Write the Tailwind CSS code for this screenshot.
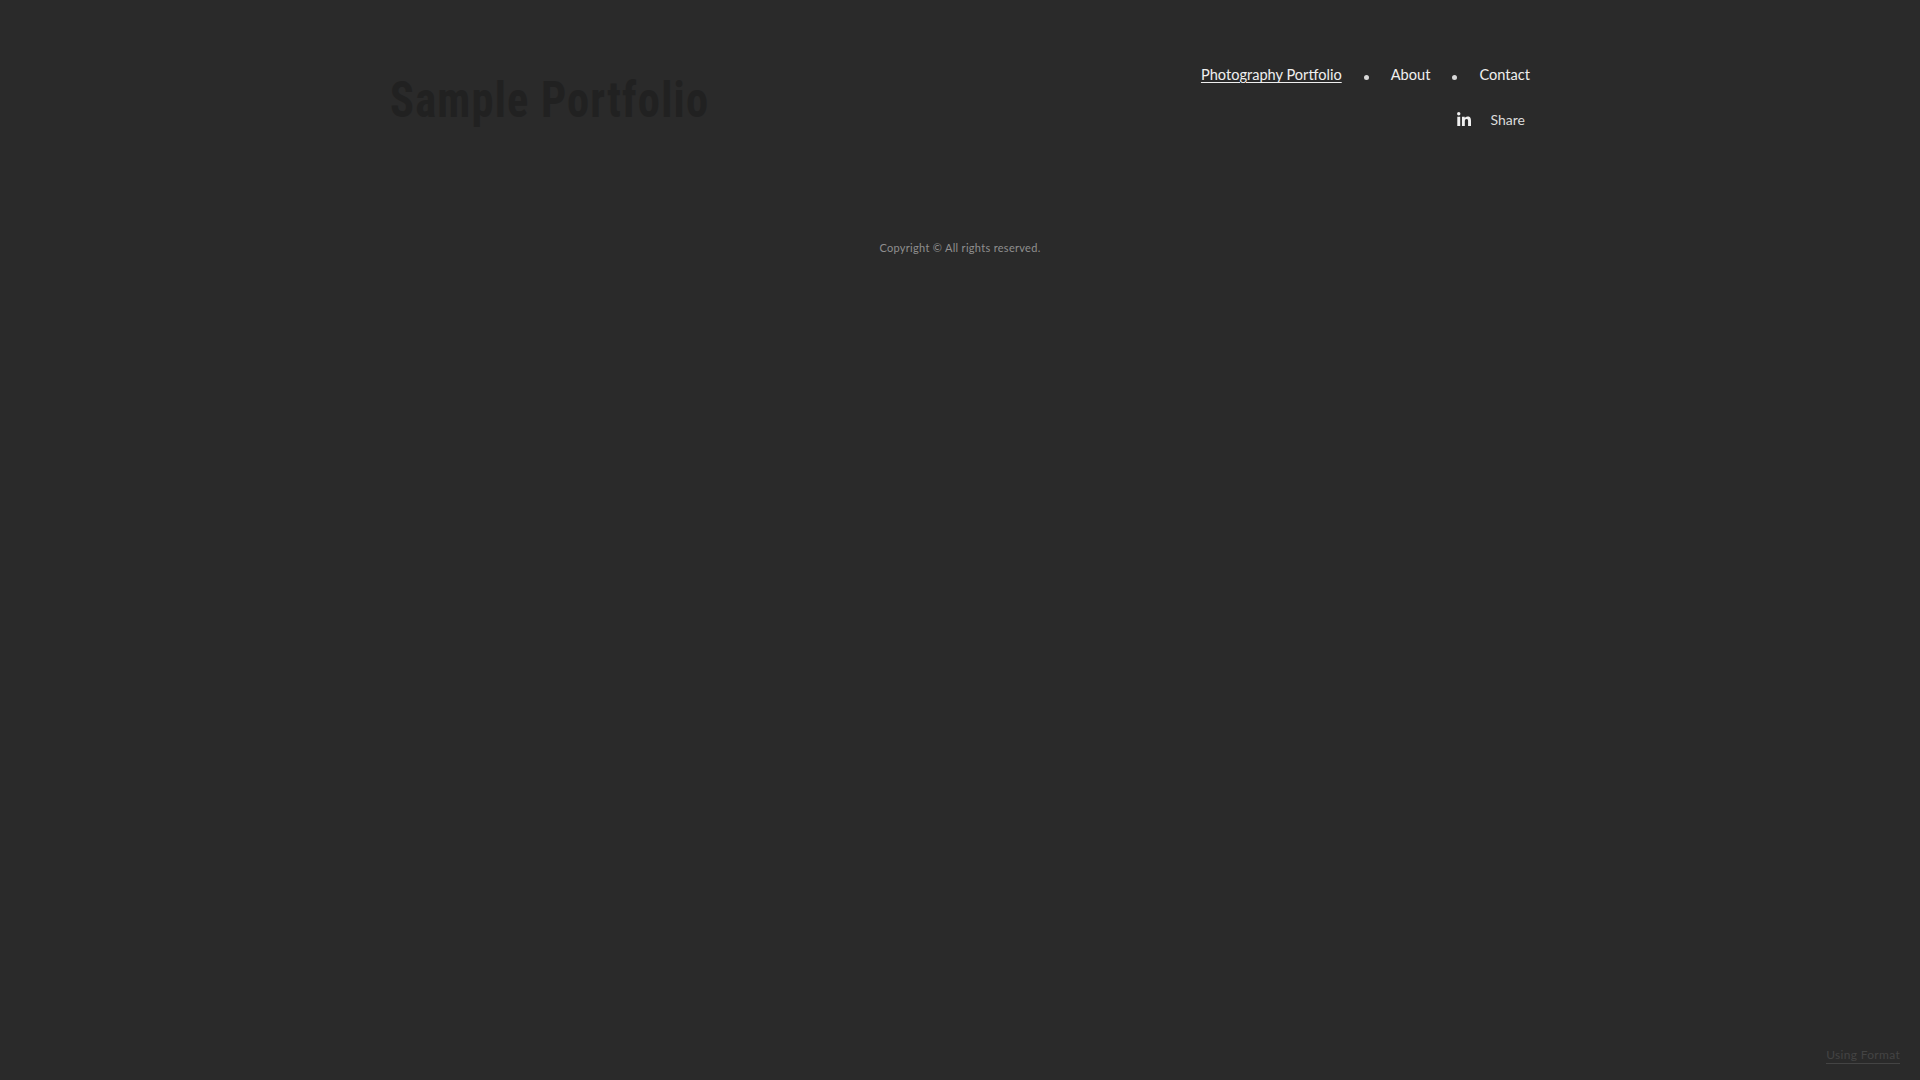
<!DOCTYPE html>
<html lang="en">
<head>
    <meta charset="UTF-8">
    <title>Sample Portfolio</title>
    <script src="https://cdn.jsdelivr.net/npm/@tailwindcss/browser@4"></script>
</head>
<body class="bg-[#2a2a2a] h-screen overflow-hidden relative font-['Lato',sans-serif]">

    <div class="w-[1140px] mx-auto pt-[55px]">
        <!-- Header -->
        <header class="flex justify-between items-start h-[179px]">
            <h1 class="font-['Roboto',sans-serif] font-bold font-stretch-condensed origin-left scale-x-[0.89] text-[50px] leading-[88px] tracking-[1.3px] text-[#212121] whitespace-nowrap w-[318px] mt-[1px]">Sample Portfolio</h1>

            <div class="flex flex-col items-end">
                <nav class="flex items-center h-[36px] mt-[2px] text-[14.6px] text-[#efefef]">
                    <a class="underline underline-offset-2" href="#">Photography Portfolio</a>
                    <span class="w-[5px] h-[5px] rounded-full bg-[#d8d8d8] mx-[22px] mt-[5px]"></span>
                    <a href="#">About</a>
                    <span class="w-[5px] h-[5px] rounded-full bg-[#d8d8d8] mx-[22px] mt-[5px]"></span>
                    <a href="#">Contact</a>
                </nav>
                <div class="flex items-center h-[36px] mt-[8px] pr-[5px] text-[14px] text-[#dcdcdc]">
                    <svg xmlns="http://www.w3.org/2000/svg" viewBox="0 0 24 24" fill="#f0f0f0" class="w-[14px] h-[14px] mr-[20px]">
                        <path d="M.5 8h5v16h-5zM3 0a2.9 2.9 0 1 1 0 5.800A2.900 2.900 0 0 1 3 0zM8.500 8h4.800v2.200h.1c.7-1.300 2.300-2.600 4.700-2.600 5 0 5.900 3.300 5.900 7.600V24h-5v-7.800c0-1.900 0-4.200-2.600-4.200s-3 2-3 4.100V24h-4.900z"/>
                    </svg>
                    <span>Share</span>
                </div>
            </div>
        </header>

        <!-- Footer -->
        <footer class="text-center text-[11px] tracking-[0.3px] text-[#8f8f8f] leading-[28px]">Copyright © All rights reserved.</footer>
    </div>

    <a href="#" class="absolute right-[20px] bottom-[16px] text-[12px] leading-[16px] tracking-[0.3px] text-[#444444] border-b border-[#444444]">Using Format</a>
</body>
</html>
